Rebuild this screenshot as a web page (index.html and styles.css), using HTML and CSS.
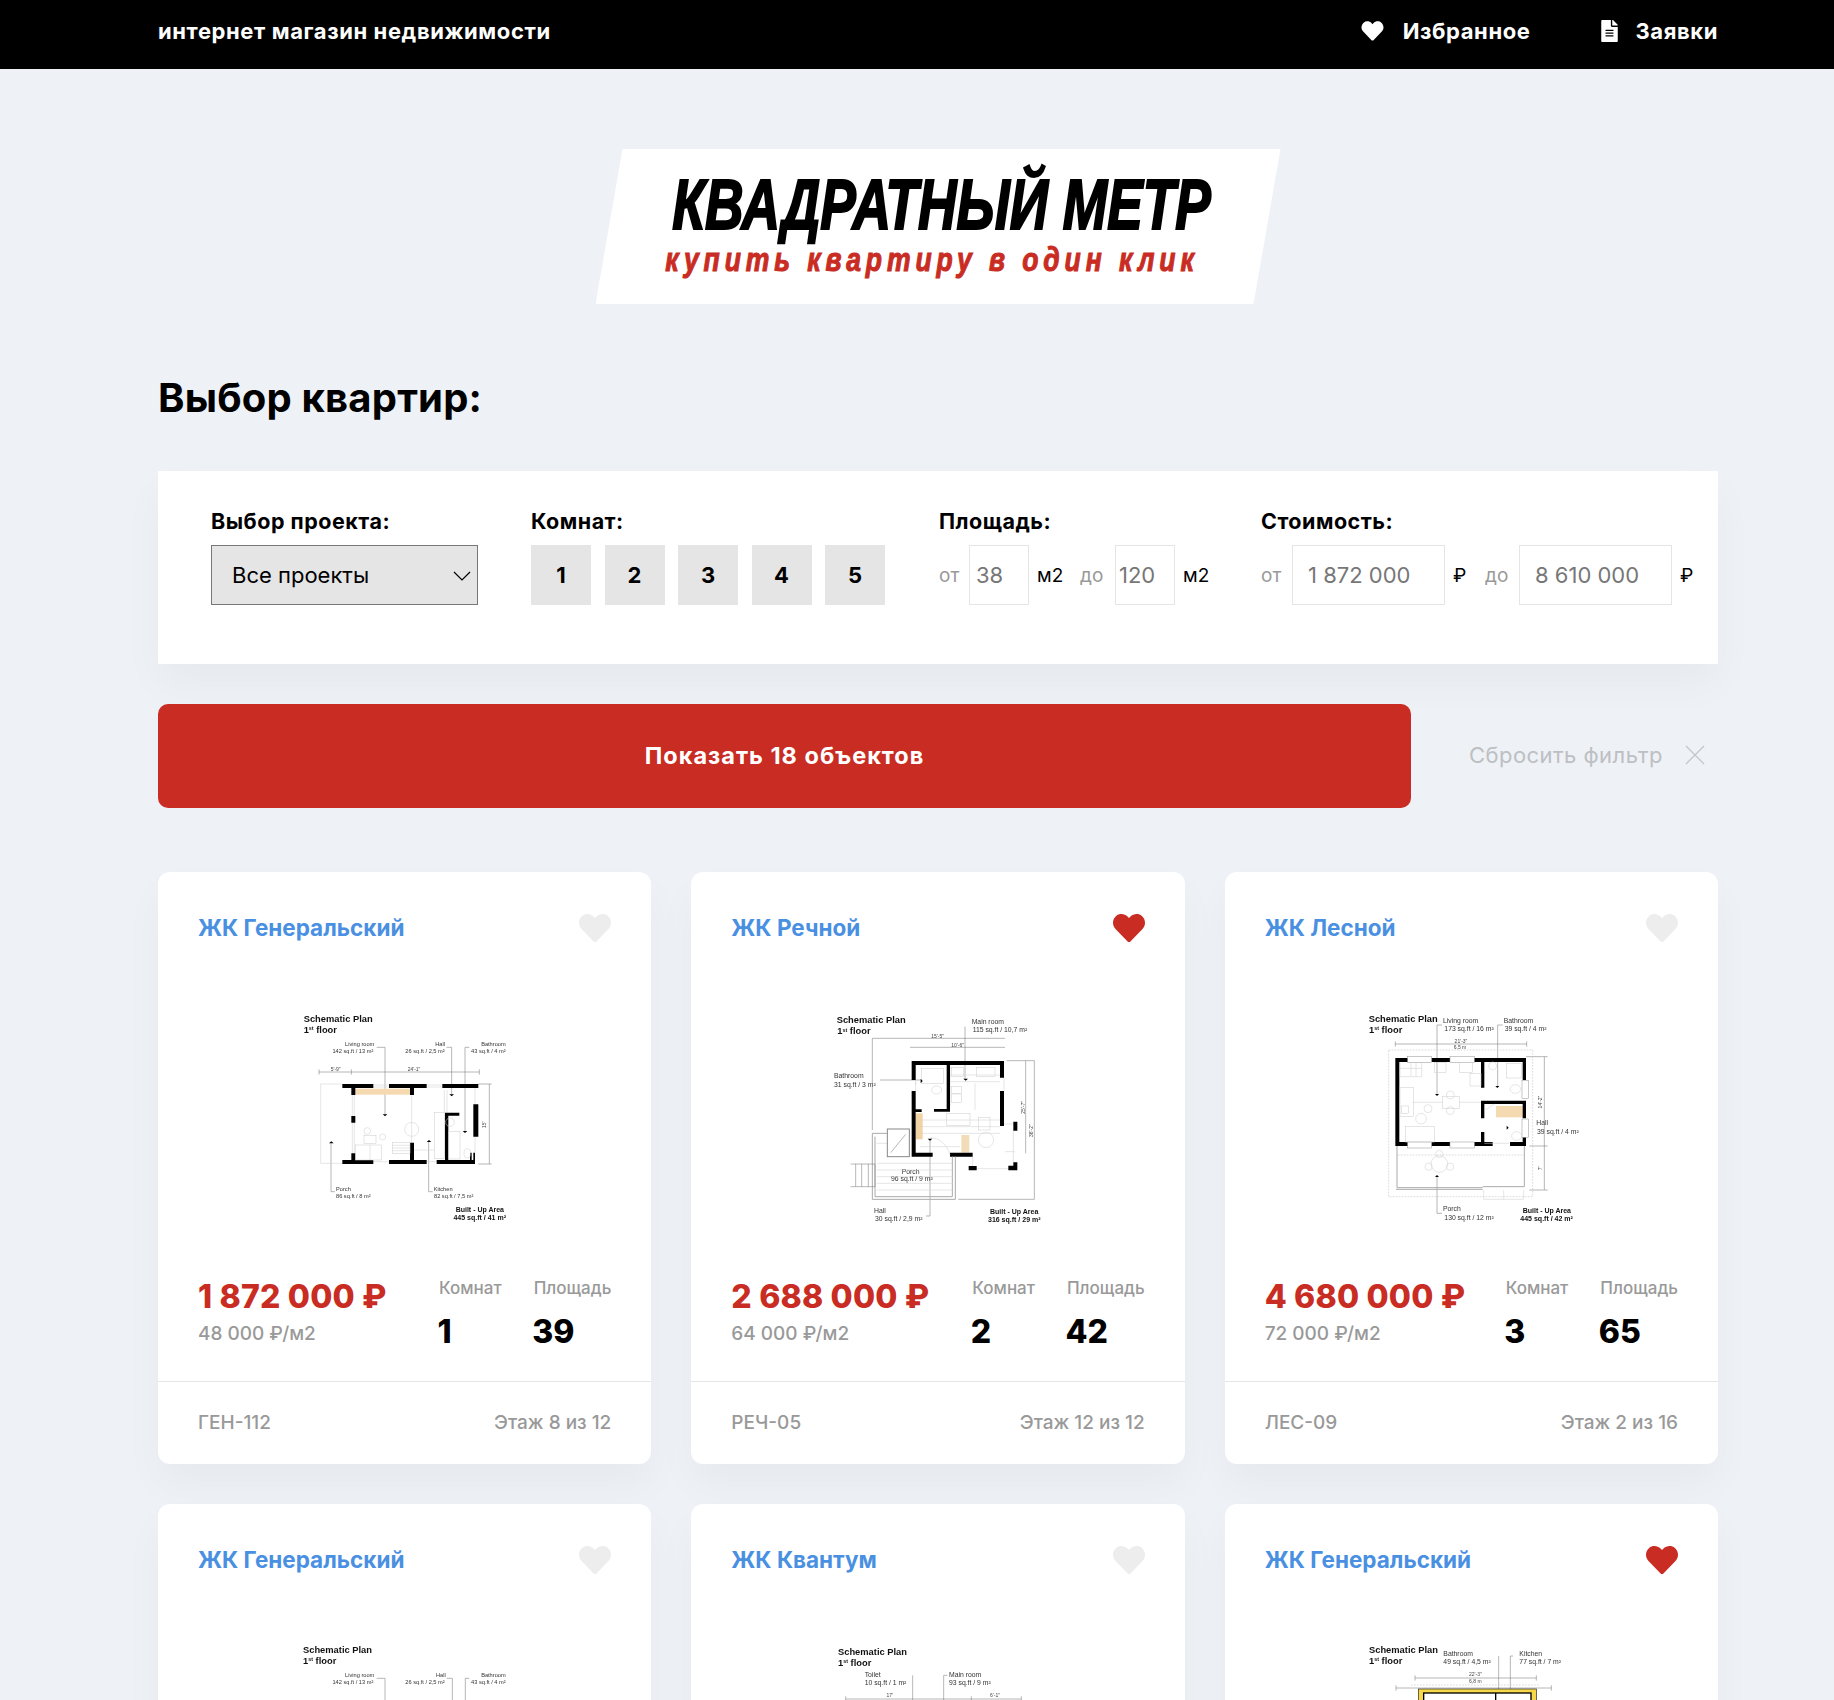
FILE: index.html
```html
<!DOCTYPE html>
<html lang="ru">
<head>
    <meta name="viewport" content="width=device-width, initial-scale=1">
    <meta charset="UTF-8">
    <title>Квадратный метр</title>
    <link rel="stylesheet" href="styles.css">
</head>
<body>
<svg class="defs" width="0" height="0">
    <symbol id="heart" viewBox="0 0 512 512"><path d="M462.3 62.6C407.5 15.9 326 24.3 275.7 76.2L256 96.5l-19.7-20.3C186.1 24.3 104.5 15.9 49.7 62.6c-62.8 53.6-66.1 149.8-9.9 207.9l193.5 199.8c12.5 12.9 32.8 12.9 45.3 0l193.5-199.8c56.3-58.1 53-154.3-9.8-207.9z"/></symbol>
    <symbol id="file" viewBox="0 0 384 512"><path d="M224 136V0H24C10.7 0 0 10.7 0 24v464c0 13.3 10.7 24 24 24h336c13.3 0 24-10.7 24-24V160H248c-13.2 0-24-10.8-24-24zm64 236c0 6.6-5.4 12-12 12H108c-6.6 0-12-5.4-12-12v-8c0-6.6 5.4-12 12-12h168c6.6 0 12 5.4 12 12v8zm0-64c0 6.6-5.4 12-12 12H108c-6.6 0-12-5.4-12-12v-8c0-6.6 5.4-12 12-12h168c6.6 0 12 5.4 12 12v8zm0-72v8c0 6.6-5.4 12-12 12H108c-6.6 0-12-5.4-12-12v-8c0-6.6 5.4-12 12-12h168c6.6 0 12 5.4 12 12zm96-114.1v6.1H256V0h6.1c6.4 0 12.5 2.5 17 7l97.9 98c4.5 4.5 7 10.6 7 16.9z"/></symbol>
</svg>

<header class="topbar">
    <div class="tagline">интернет магазин недвижимости</div>
    <nav class="topnav">
        <a class="topnav-link"><svg class="icon-heart"><use href="#heart"/></svg>Избранное</a>
        <a class="topnav-link"><svg class="icon-file"><use href="#file"/></svg>Заявки</a>
    </nav>
</header>

<main class="container">
    <div class="logo-wrap">
        <div class="logo">
            <div class="logo-title">КВАДРАТНЫЙ МЕТР</div>
            <div class="logo-sub">купить квартиру в один клик</div>
        </div>
    </div>

    <h1 class="page-title">Выбор квартир:</h1>

    <form class="filter">
        <div class="filter-col">
            <label class="filter-label">Выбор проекта:</label>
            <div class="select-wrap">
                <select class="select"><option>Все проекты</option></select>
                <svg class="select-arrow" viewBox="0 0 18 10"><path d="M1 1l8 8 8-8" fill="none" stroke="#000" stroke-width="1.2"/></svg>
            </div>
        </div>
        <div class="filter-col">
            <label class="filter-label">Комнат:</label>
            <div class="rooms">
                <button type="button" class="room">1</button>
                <button type="button" class="room">2</button>
                <button type="button" class="room">3</button>
                <button type="button" class="room">4</button>
                <button type="button" class="room">5</button>
            </div>
        </div>
        <div class="filter-col">
            <label class="filter-label">Площадь:</label>
            <div class="range">
                <span class="muted">от</span>
                <input class="field field-area" type="text" value="38">
                <span class="unit">м2</span>
                <span class="muted muted-to">до</span>
                <input class="field field-area field-tight" type="text" value="120">
                <span class="unit">м2</span>
            </div>
        </div>
        <div class="filter-col">
            <label class="filter-label">Стоимость:</label>
            <div class="range range-price">
                <span class="muted">от</span>
                <input class="field field-price" type="text" value="1 872 000">
                <span class="unit unit-rub">₽</span>
                <span class="muted muted-to">до</span>
                <input class="field field-price" type="text" value="8 610 000">
                <span class="unit unit-rub">₽</span>
            </div>
        </div>
    </form>

    <div class="actions">
        <button type="button" class="show-btn">Показать 18 объектов</button>
        <a class="reset">Сбросить фильтр
            <svg class="reset-x" viewBox="0 0 20 20"><path d="M1 1l18 18M19 1L1 19" stroke="#c4c6c9" stroke-width="1.3" fill="none"/></svg>
        </a>
    </div>

    <section class="cards">
        <article class="card">
            <div class="card-head">
                <a class="card-name">ЖК Генеральский</a>
                <svg class="like"><use href="#heart"/></svg>
            </div>
            <svg class="plan" viewBox="375 420 780 720">
                <text class="pt" x="461" y="487">Schematic Plan</text>
                <text class="pt" x="461" y="519">1<tspan class="sup" dy="-8">st</tspan><tspan dy="8"> floor</tspan></text>
                <g class="pl">
                    <text x="673" y="558" text-anchor="end">Living room</text>
                    <text x="670" y="578" text-anchor="end">142 sq.ft / 13 m²</text>
                    <text x="885" y="558" text-anchor="end">Hall</text>
                    <text x="884" y="578" text-anchor="end">26 sq.ft / 2,5 m²</text>
                    <text x="1067" y="558" text-anchor="end">Bathroom</text>
                    <text x="1067" y="578" text-anchor="end">43 sq.ft / 4 m²</text>
                    <text x="558" y="994">Porch</text>
                    <text x="558" y="1014">86 sq.ft / 8 m²</text>
                    <text x="851" y="994">Kitchen</text>
                    <text x="852" y="1014">82 sq.ft / 7,5 m²</text>
                </g>
                <g class="pd" text-anchor="middle">
                    <text x="557" y="634">5'-9"</text>
                    <text x="792" y="634">24'-1"</text>
                    <text x="1007" y="794" transform="rotate(-90 1007 794)">15'</text>
                </g>
                <path class="ln" d="M680 562h25v203M890 562h15v143M958 562h-13v253M507 636h481M507 628v16M604 628v16M988 628v16M985 672h40M985 912h40M1018 672v240M543 850v145h12M836 845v150h12"/>
                <path class="ln-light" d="M512 672v238h65M512 672h65M670 675h47M670 681h47M830 675h47M830 681h47M607 705v175M613 705v175M670 905h47M830 905h30M785 705v143M883 690v68M891 690v68M975 680v53M975 830v47"/>
                <rect x="616" y="686" width="164" height="18" fill="#f5d9b0"/>
                <path class="wl" d="M577 672h93v12h-54v21h-12v-21h-27zM717 672h113v12h-38v21h-12v-21h-63zM877 672h108v12H877zM604 768h12v20h-12zM604 880h12v20h-12zM577 900h93v12h-93zM717 900h63v-52h12v52h38v12H717zM860 900h25V758h43v9h-33v133h75v-22h-5v22h-5v-22h15v34H860zM970 733h15v97h-15z"/>
                <g class="ln-light">
                    <circle cx="785" cy="808" r="21"/>
                    <circle cx="652" cy="813" r="10"/>
                    <circle cx="698" cy="831" r="9"/>
                    <rect x="642" y="827" width="36" height="24"/>
                    <rect x="616" y="855" width="78" height="45"/>
                    <rect x="727" y="848" width="53" height="32"/>
                    <path d="M727 856h53M727 864h53M727 872h53M660 855v45"/>
                    <rect x="853" y="758" width="30" height="138"/>
                    <path d="M792 870h61"/>
                    <rect x="895" y="815" width="35" height="82"/>
                    <ellipse cx="952" cy="880" rx="10" ry="14"/>
                    <circle cx="900" cy="787" r="13"/>
                </g>
                <path class="wl" d="M698 763h14l-7 6zM898 703h14l-7 6zM938 813h14l-7 6zM537 850h14l-7-6zM830 846h14l-7-6z"/>
                <text class="pt pt-s" x="1062" y="1056" text-anchor="end">Built - Up Area</text>
                <text class="pt pt-s" x="1068" y="1080" text-anchor="end">445 sq.ft / 41 m²</text>
            </svg>
            <div class="card-info">
                <div>
                    <div class="price">1 872 000 ₽</div>
                    <div class="price-sub">48 000 ₽/м2</div>
                </div>
                <div class="stats">
                    <div class="stat"><div class="stat-label">Комнат</div><div class="stat-value">1</div></div>
                    <div class="stat"><div class="stat-label">Площадь</div><div class="stat-value">39</div></div>
                </div>
            </div>
            <div class="card-foot"><span>ГЕН-112</span><span>Этаж 8 из 12</span></div>
        </article>

        <article class="card">
            <div class="card-head">
                <a class="card-name">ЖК Речной</a>
                <svg class="like like-on"><use href="#heart"/></svg>
            </div>
            <svg class="plan" viewBox="384 60 780 720">
                <text class="pt" x="470" y="130">Schematic Plan</text>
                <text class="pt" x="472" y="163">1<tspan class="sup" dy="-8">st</tspan><tspan dy="8"> floor</tspan></text>
                <g class="pl pl-m">
                    <text x="875" y="133">Main room</text>
                    <text x="878" y="157">115 sq.ft / 10,7 m²</text>
                    <text x="462" y="295">Bathroom</text>
                    <text x="462" y="320">31 sq.ft / 3 m²</text>
                    <text x="665" y="583">Porch</text>
                    <text x="633" y="604">96 sq.ft / 9 m²</text>
                    <text x="582" y="698">Hall</text>
                    <text x="585" y="724">30 sq.ft / 2,9 m²</text>
                </g>
                <g class="pd" text-anchor="middle">
                    <text x="773" y="174">15'-5"</text>
                    <text x="833" y="201">10'-6"</text>
                    <text x="1035" y="382" transform="rotate(-90 1035 382)">25'-7"</text>
                    <text x="1060" y="452" transform="rotate(-90 1060 452)">36'-2"</text>
                </g>
                <path class="ln" d="M577 175h398M577 175v275M690 202h285M980 242h83M1037 242v278M1063 242v416M835 658h228M855 140v158M600 300h125M750 478v230h-12"/>
                <rect x="708" y="400" width="20" height="78" fill="#f1d3a4"/>
                <rect x="844" y="465" width="24" height="53" fill="#f3dcb8"/>
                <path class="ln-light" d="M707 255v60M810 260v120M972 293v40M707 300v33M720 420h240M720 440h240M720 460h240M720 500h120M812 285h148M812 305h148M885 310v80M972 432h28M1000 452v95M890 566h95M1005 515h-30M878 530v28"/>
                <path class="wl" d="M695 243h277v50h-12v-38H810v140h-48v-8h38V255H707v45h-12zM695 333h12v55h18v8h-18v122h51v12h-63zM960 333h12v105h-12zM810 518h68v12h-68zM1000 425h12v27h-12zM1000 547h12v24h-27v-14h15zM866 558h24v13h-24z"/>
                <g class="ln-light">
                    <rect x="725" y="265" width="65" height="45"/>
                    <ellipse cx="770" cy="330" rx="15" ry="12"/>
                    <rect x="815" y="262" width="35" height="28"/>
                    <rect x="815" y="320" width="30" height="20"/>
                    <rect x="815" y="342" width="30" height="25"/>
                    <rect x="890" y="262" width="55" height="28" fill="#ddd"/>
                    <rect x="800" y="400" width="70" height="36"/>
                    <circle cx="918" cy="480" r="23"/>
                    <rect x="895" y="412" width="35" height="38"/>
                    <path d="M810 525c-8-30-30-52-60-52"/>
                </g>
                <path class="ln-mid" d="M577 460h45M577 460v198h249V530M585 470v180h232V530"/>
                <path class="ln-light" d="M590 490h32M590 550h230M590 570h230M590 590h230M590 610h230M590 630h230"/>
                <rect x="622" y="447" width="66" height="83" fill="#fff" stroke="#888" stroke-width="3"/>
                <path class="ln" d="M632 518l45-55M512 552h73M512 620h73M527 552v68M545 552v68M565 552v68M585 552v68"/>
                <path class="wl" d="M850 296h14l-7 6zM722 296v14l6-7zM743 476h14l-7 6z"/>
                <text class="pt pt-s" x="930" y="703">Built - Up Area</text>
                <text class="pt pt-s" x="924" y="727">316 sq.ft / 29 m²</text>
            </svg>
            <div class="card-info">
                <div>
                    <div class="price">2 688 000 ₽</div>
                    <div class="price-sub">64 000 ₽/м2</div>
                </div>
                <div class="stats">
                    <div class="stat"><div class="stat-label">Комнат</div><div class="stat-value">2</div></div>
                    <div class="stat"><div class="stat-label">Площадь</div><div class="stat-value">42</div></div>
                </div>
            </div>
            <div class="card-foot"><span>РЕЧ-05</span><span>Этаж 12 из 12</span></div>
        </article>

        <article class="card">
            <div class="card-head">
                <a class="card-name">ЖК Лесной</a>
                <svg class="like"><use href="#heart"/></svg>
            </div>
            <svg class="plan" viewBox="365 60 780 720">
                <text class="pt" x="448" y="125">Schematic Plan</text>
                <text class="pt" x="449" y="158">1<tspan class="sup" dy="-8">st</tspan><tspan dy="8"> floor</tspan></text>
                <g class="pl pl-m">
                    <text x="671" y="128">Living room</text>
                    <text x="675" y="152">173 sq.ft / 16 m²</text>
                    <text x="853" y="128">Bathroom</text>
                    <text x="856" y="152">39 sq.ft / 4 m²</text>
                    <text x="951" y="435">Hall</text>
                    <text x="953" y="461">39 sq.ft / 4 m²</text>
                    <text x="671" y="694">Porch</text>
                    <text x="675" y="719">130 sq.ft / 12 m²</text>
                </g>
                <g class="pd" text-anchor="middle">
                    <text x="725" y="190">21'-3"</text>
                    <text x="722" y="208">6,5 m</text>
                    <text x="968" y="366" transform="rotate(-90 968 366)">14'-2"</text>
                    <text x="968" y="565" transform="rotate(-90 968 565)">7'</text>
                </g>
                <path class="ln" d="M528 192h394M528 184v16M922 184v16M920 230h65M975 230v400M930 498h55M930 630h55M653 135v210M835 135v185M653 590v110h15M668 135h-15M850 135h-15"/>
                <path class="ln-dash" d="M508 210h432v440H508zM535 525h380"/>
                <rect x="830" y="378" width="80" height="34" fill="#f5d9b0"/>
                <path class="wl" d="M528 234h392v66h-10v-54H795v77h-10v-77H540v240h245v-30h10v30h25v12H528zM872 486h38v-16h10v28h-48zM785 362h135v53h-10v-43H795v43h-10z"/>
                <g class="window">
                    <rect x="565" y="230" width="72" height="18"/>
                    <rect x="692" y="230" width="73" height="18"/>
                    <rect x="565" y="486" width="72" height="18"/>
                    <rect x="692" y="486" width="73" height="18"/>
                    <rect x="908" y="302" width="20" height="53"/>
                    <rect x="908" y="417" width="20" height="55"/>
                </g>
                <g class="ln-light">
                    <path d="M542 248v42h65v-42M575 248v42M590 248v42M542 265h65"/>
                    <rect x="645" y="248" width="35" height="30"/>
                    <rect x="720" y="248" width="40" height="30"/>
                    <rect x="752" y="280" width="33" height="38"/>
                    <rect x="542" y="322" width="40" height="88" fill="#e4e4e4"/>
                    <rect x="546" y="378" width="22" height="22" fill="#fff"/>
                    <rect x="558" y="440" width="87" height="46"/>
                    <circle cx="605" cy="416" r="16"/>
                    <circle cx="626" cy="386" r="12"/>
                    <rect x="670" y="350" width="50" height="36"/>
                    <circle cx="693" cy="345" r="12"/>
                    <circle cx="693" cy="392" r="12"/>
                    <circle cx="820" cy="258" r="12"/>
                    <rect x="862" y="250" width="45" height="44"/>
                    <ellipse cx="888" cy="327" rx="16" ry="13"/>
                    <ellipse cx="892" cy="468" rx="15" ry="13"/>
                    <circle cx="660" cy="552" r="25"/>
                    <circle cx="660" cy="522" r="11"/>
                    <circle cx="628" cy="560" r="11"/>
                    <circle cx="692" cy="560" r="11"/>
                    <path d="M795 392l30-20M580 367h90M720 367h65M795 490h75M793 630v28h120v-28M853 630v28"/>
                </g>
                <path class="ln-mid" d="M533 498v125h257M915 498v122H790M530 628h260"/>
                <path class="wl" d="M647 342h12l-6 6zM828 318h12l-6 6zM862 437v12l6-6zM647 591h12l-6-6z"/>
                <text class="pt pt-s" x="910" y="699">Built - Up Area</text>
                <text class="pt pt-s" x="903" y="723">445 sq.ft / 42 m²</text>
            </svg>
            <div class="card-info">
                <div>
                    <div class="price">4 680 000 ₽</div>
                    <div class="price-sub">72 000 ₽/м2</div>
                </div>
                <div class="stats">
                    <div class="stat"><div class="stat-label">Комнат</div><div class="stat-value">3</div></div>
                    <div class="stat"><div class="stat-label">Площадь</div><div class="stat-value">65</div></div>
                </div>
            </div>
            <div class="card-foot"><span>ЛЕС-09</span><span>Этаж 2 из 16</span></div>
        </article>

        <article class="card">
            <div class="card-head">
                <a class="card-name">ЖК Генеральский</a>
                <svg class="like"><use href="#heart"/></svg>
            </div>
            <svg class="plan" viewBox="375 420 780 720">
                <text class="pt" x="459" y="484">Schematic Plan</text>
                <text class="pt" x="459" y="516">1<tspan class="sup" dy="-8">st</tspan><tspan dy="8"> floor</tspan></text>
                <g class="pl">
                    <text x="673" y="555" text-anchor="end">Living room</text>
                    <text x="670" y="575" text-anchor="end">142 sq.ft / 13 m²</text>
                    <text x="887" y="555" text-anchor="end">Hall</text>
                    <text x="884" y="575" text-anchor="end">26 sq.ft / 2,5 m²</text>
                    <text x="1067" y="555" text-anchor="end">Bathroom</text>
                    <text x="1067" y="575" text-anchor="end">43 sq.ft / 4 m²</text>
                </g>
                <path class="ln" d="M680 559h25v80M890 559h17v80M958 559h-12v80"/>
            </svg>
        </article>

        <article class="card">
            <div class="card-head">
                <a class="card-name">ЖК Квантум</a>
                <svg class="like"><use href="#heart"/></svg>
            </div>
            <svg class="plan" viewBox="0 0 780 720">
                <text class="pt" x="90" y="69">Schematic Plan</text>
                <text class="pt" x="90" y="102">1<tspan class="sup" dy="-8">st</tspan><tspan dy="8"> floor</tspan></text>
                <g class="pl pl-m">
                    <text x="170" y="135">Toilet</text>
                    <text x="170" y="159">10 sq.ft / 1 m²</text>
                    <text x="423" y="135">Main room</text>
                    <text x="423" y="159">93 sq.ft / 9 m²</text>
                </g>
                <g class="pd" text-anchor="middle">
                    <text x="245" y="196">17'</text>
                    <text x="561" y="196">6'-1"</text>
                </g>
                <path class="ln" d="M314 130v90M418 130h-11v90M113 201h527M113 193v16M640 193v16M490 193v16"/>
            </svg>
        </article>

        <article class="card">
            <div class="card-head">
                <a class="card-name">ЖК Генеральский</a>
                <svg class="like like-on"><use href="#heart"/></svg>
            </div>
            <svg class="plan" viewBox="0 0 780 720">
                <text class="pt" x="84" y="63">Schematic Plan</text>
                <text class="pt" x="84" y="96">1<tspan class="sup" dy="-8">st</tspan><tspan dy="8"> floor</tspan></text>
                <g class="pl pl-m">
                    <text x="307" y="72">Bathroom</text>
                    <text x="307" y="96">49 sq.ft / 4,5 m²</text>
                    <text x="535" y="72">Kitchen</text>
                    <text x="535" y="96">77 sq.ft / 7 m²</text>
                </g>
                <g class="pd" text-anchor="middle">
                    <text x="403" y="132">22'-3"</text>
                    <text x="403" y="152">6,8 m</text>
                </g>
                <path class="ln" d="M222 138h364M222 130v16M586 130v16M165 168h466M165 160v16M631 160v16M473 72v120M516 72h-8v120"/>
                <path class="ln-dash" d="M210 159h385"/>
                <rect x="232" y="171" width="354" height="60" fill="#f6d84a" stroke="#222" stroke-width="2"/>
                <rect x="248" y="183" width="322" height="40" fill="#fff" stroke="#000" stroke-width="4"/>
                <path class="wl" d="M462 183h4v40h-4z"/>
            </svg>
        </article>
    </section>
</main>
</body>
</html>
```

FILE: styles.css
```css
html, body {
    margin: 0;
    padding: 0;
}

body {
    height: 1700px;
    overflow: hidden;
    background-color: #eef1f6;
    font-family: Inter, "Noto Sans", sans-serif;
    color: #000;
}

.defs {
    position: absolute;
}

.topbar {
    box-sizing: border-box;
    height: 69px;
    background-color: #000;
    color: #fff;
    display: flex;
    justify-content: space-between;
    align-items: center;
    padding: 0 116px 8px 158px;
    font-size: 22px;
    font-weight: 700;
    letter-spacing: .6px;
}

.topnav {
    display: flex;
    gap: 70px;
}

.topnav-link {
    display: flex;
    align-items: center;
}

.icon-heart {
    width: 23px;
    height: 22px;
    fill: #fff;
    margin-right: 19px;
}

.icon-file {
    width: 17px;
    height: 22px;
    fill: #fff;
    margin-right: 18px;
}

.container {
    padding: 0 116px 0 158px;
}

.logo-wrap {
    display: flex;
    justify-content: center;
    padding-top: 80px;
}

.logo {
    width: 685px;
    height: 155px;
    background-color: #fff;
    clip-path: polygon(27px 0, 100% 0, 658px 100%, 0 100%);
    display: flex;
    flex-direction: column;
    align-items: center;
    font-family: "Liberation Sans", sans-serif;
    font-weight: 700;
    font-style: italic;
    white-space: nowrap;
}

.logo-title {
    font-size: 71px;
    line-height: 74px;
    margin-top: 19px;
    -webkit-text-stroke: 2.2px #000;
    transform: translateX(3.5px) scaleX(.75);
}

.logo-sub {
    font-size: 34px;
    line-height: 36px;
    margin-top: -1px;
    letter-spacing: 6.3px;
    color: #c92c22;
    -webkit-text-stroke: 1.1px #c92c22;
    transform: translateX(-6px) scaleX(.78);
}

.page-title {
    margin: 71px 0 50px;
    font-size: 40px;
    line-height: 46px;
    font-weight: 700;
    letter-spacing: .2px;
}

.filter {
    background-color: #fff;
    display: flex;
    gap: 53px;
    padding: 38px 53px 59px;
    height: 96px;
    box-shadow: 0 20px 40px rgba(0, 0, 0, .035);
}

.filter-label {
    display: block;
    font-size: 21.5px;
    line-height: 24px;
    font-weight: 700;
    letter-spacing: .5px;
    margin-bottom: 12px;
}

.select-wrap {
    position: relative;
    width: 267px;
}

.select {
    appearance: none;
    width: 100%;
    height: 60px;
    padding: 0 0 0 20px;
    background-color: #e5e5e5;
    border: 1px solid #777;
    border-radius: 0;
    font-family: inherit;
    font-size: 22px;
    color: #000;
}

.select-arrow {
    position: absolute;
    right: 7px;
    top: 26px;
    width: 18px;
    height: 10px;
}

.rooms {
    display: flex;
    gap: 13.5px;
    margin-right: 1px;
}

.room {
    width: 60px;
    height: 60px;
    border: none;
    background-color: #e5e5e5;
    font-family: inherit;
    font-size: 22px;
    font-weight: 700;
    color: #000;
}

.range {
    display: flex;
    align-items: center;
    height: 60px;
    font-size: 19px;
    white-space: nowrap;
}

.muted {
    flex: none;
    width: 30px;
    color: #999;
}

.muted-to {
    width: 35px;
    margin-left: 18px;
}

.range-price .muted {
    width: 31px;
}

.range-price .muted-to {
    width: 34px;
}

.unit {
    flex: none;
    width: 25px;
    margin-left: 8px;
}

.unit-rub {
    width: 12px;
    margin-right: 2px;
}

.field {
    flex: none;
    box-sizing: border-box;
    height: 60px;
    border: 1px solid #e5e5e5;
    font-family: inherit;
    font-size: 22px;
    color: #777;
    outline: none;
}

.field-area {
    width: 60px;
    padding: 0 0 0 6px;
}

.field-tight {
    padding-left: 3px;
}

.field-price {
    width: 153px;
    padding: 0 0 0 15px;
}

.actions {
    display: flex;
    align-items: center;
    margin-top: 40px;
}

.show-btn {
    width: 1253px;
    height: 104px;
    padding-bottom: 3px;
    border: none;
    border-radius: 10px;
    background-color: #c92c22;
    color: #fff;
    font-family: inherit;
    font-size: 23.5px;
    font-weight: 700;
    letter-spacing: 1px;
}

.reset {
    display: flex;
    align-items: center;
    margin-left: 58px;
    padding-bottom: 2px;
    font-size: 22px;
    letter-spacing: .45px;
    color: #bdbfc2;
    white-space: nowrap;
}

.reset-x {
    width: 20px;
    height: 20px;
    margin-left: 22px;
}

.cards {
    display: grid;
    grid-template-columns: repeat(3, 1fr);
    gap: 40px;
    margin-top: 64px;
}

.card {
    height: 592px;
    background-color: #fff;
    border-radius: 12px;
    box-shadow: 0 20px 40px rgba(0, 0, 0, .035);
    display: flex;
    flex-direction: column;
}

.card-head {
    display: flex;
    justify-content: space-between;
    align-items: center;
    padding: 41px 40px 0;
}

.card-name {
    font-size: 22.5px;
    font-weight: 700;
    color: #4a90e2;
}

.like {
    width: 32px;
    height: 32px;
    margin: -1px 0 -2px;
    fill: #ededed;
}

.like-on {
    fill: #c92c22;
}

.plan {
    display: block;
    width: 260px;
    height: 240px;
    margin: 58px auto 0;
    flex: none;
    filter: blur(.4px);
}

.pt {
    font-family: "Liberation Sans", sans-serif;
    font-size: 28px;
    font-weight: 700;
    fill: #111;
}

.pt-s {
    font-size: 21px;
}

.sup {
    font-size: 16px;
}

.pl text {
    font-family: "Liberation Sans", sans-serif;
    font-size: 17px;
    fill: #333;
}

.pl-m text {
    font-size: 20.5px;
}

.pd text {
    font-family: "Liberation Sans", sans-serif;
    font-size: 15px;
    fill: #444;
}

.wl {
    fill: #000;
}

.ln {
    fill: none;
    stroke: #777;
    stroke-width: 1.6;
}

.ln-mid {
    fill: none;
    stroke: #aaa;
    stroke-width: 3;
}

.ln-light, .ln-light * {
    fill: none;
    stroke: #cfcfcf;
    stroke-width: 1.6;
}

.ln-dash {
    fill: none;
    stroke: #bbb;
    stroke-width: 1.6;
    stroke-dasharray: 5 4;
}

.window rect {
    fill: #fff;
    stroke: #999;
    stroke-width: 1.6;
}

.card-info {
    display: flex;
    justify-content: space-between;
    padding: 38px 40px 0;
    height: 103px;
}

.price {
    font-size: 32px;
    line-height: 38px;
    font-weight: 800;
    letter-spacing: .2px;
    color: #c92c22;
}

.price-sub {
    margin-top: 6px;
    font-size: 19px;
    line-height: 24px;
    font-weight: 500;
    color: #999;
}

.stats {
    display: flex;
    gap: 32px;
}

.stat-label {
    font-size: 17px;
    line-height: 20px;
    font-weight: 500;
    color: #999;
}

.stat-value {
    margin: 16px 0 0 -1.5px;
    font-size: 32px;
    line-height: 36px;
    font-weight: 800;
}

.card-foot {
    flex: 1;
    display: flex;
    justify-content: space-between;
    align-items: center;
    padding: 0 40px 2px;
    border-top: 1px solid #e5e5e5;
    font-size: 19px;
    font-weight: 500;
    color: #999;
}
```
